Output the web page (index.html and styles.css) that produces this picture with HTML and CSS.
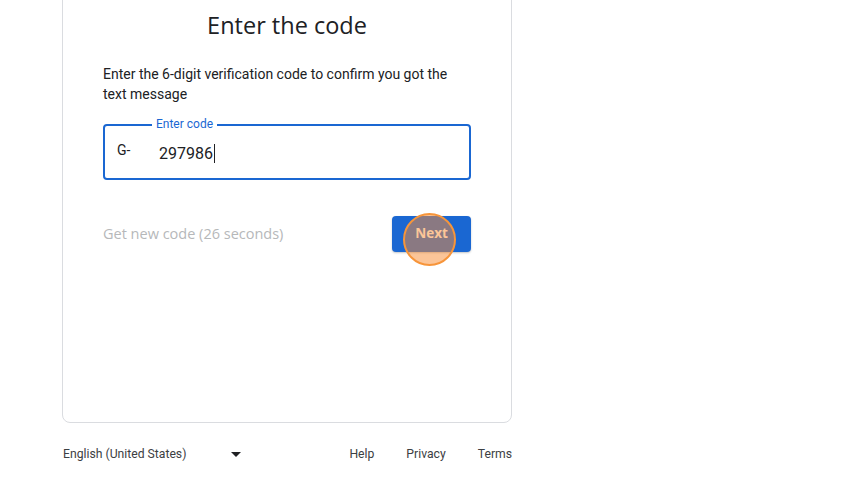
FILE: index.html
```html
<!DOCTYPE html>
<html lang="en">
<head>
<meta charset="utf-8">
<title>Enter the code</title>
<link rel="stylesheet" href="styles.css">
</head>
<body>
<div class="page">
  <main class="card">
    <h1 class="title">Enter the code</h1>
    <p class="desc">Enter the 6-digit verification code to confirm you got the text message</p>
    <div class="field">
      <span class="label">Enter code</span>
      <span class="prefix">G-</span>
      <span class="value">297986</span><span class="caret"></span>
    </div>
    <div class="actions">
      <span class="resend">Get new code (26 seconds)</span>
      <button class="next">Next<span class="click"></span></button>
    </div>
  </main>
  <footer class="footer">
    <div class="lang">
      <span>English (United States)</span>
      <svg class="arrow" width="10" height="5" viewBox="0 0 10 5"><path d="M0 0h10L5 5z" fill="#202124"/></svg>
    </div>
    <nav class="links">
      <a>Help</a>
      <a>Privacy</a>
      <a>Terms</a>
    </nav>
  </footer>
</div>
</body>
</html>
```

FILE: styles.css
```css
html, body {
  margin: 0;
  padding: 0;
  background: #fff;
  overflow: hidden;
}
.page {
  width: 450px;
  margin-left: 62px;
  font-family: Roboto, "Liberation Sans", Arial, sans-serif;
  color: #202124;
}
.card {
  box-sizing: border-box;
  height: 454px;
  margin-top: -31px;
  border: 1px solid #dadce0;
  border-radius: 8px;
  padding: 39px 40px 0;
}
.title {
  margin: 0;
  font-family: "Open Sans", Roboto, sans-serif;
  font-weight: 400;
  font-size: 23.5px;
  line-height: 32px;
  text-align: center;
  color: #202124;
}
.desc {
  margin: 23px 0 0;
  font-size: 14px;
  line-height: 20px;
  color: #202124;
}
.field {
  position: relative;
  box-sizing: border-box;
  height: 56px;
  margin-top: 20px;
  border: 2px solid #1a67d2;
  border-radius: 4px;
  display: flex;
  align-items: center;
  padding-left: 12px;
}
.label {
  position: absolute;
  top: -9px;
  left: 47px;
  padding: 0 4px;
  background: #fff;
  font-size: 12px;
  line-height: 14px;
  color: #1a67d2;
}
.prefix {
  font-size: 14px;
  width: 42px;
  margin-top: -4px;
}
.value {
  font-size: 16px;
  color: #202124;
  margin-top: 2px;
}
.caret {
  width: 1px;
  height: 19px;
  background: #202124;
  margin-left: 1px;
  margin-top: 2px;
}
.actions {
  margin-top: 36px;
  display: flex;
  align-items: center;
  justify-content: space-between;
  height: 36px;
}
.resend {
  font-family: "Open Sans", Roboto, sans-serif;
  font-size: 14.5px;
  font-weight: 500;
  color: #b6b8ba;
  margin-top: -2px;
}
.next {
  position: relative;
  width: 79px;
  height: 36px;
  border: none;
  border-radius: 4px;
  background: #1a67d2;
  color: #fff;
  font-family: "Open Sans", Roboto, sans-serif;
  font-weight: 700;
  font-size: 13.5px;
  padding: 0 0 3px;
  box-shadow: 0 1px 2px rgba(60,64,67,0.3);
}
.click {
  position: absolute;
  left: 11px;
  top: -3px;
  width: 49px;
  height: 49px;
  border: 2px solid #f7953a;
  border-radius: 50%;
  background: rgba(250, 140, 50, 0.5);
}
.footer {
  margin-top: 21px;
  display: flex;
  justify-content: space-between;
  align-items: center;
  height: 20px;
  font-size: 12.2px;
  color: #3c4043;
}
.lang {
  display: flex;
  align-items: center;
  padding-left: 1px;
}
.arrow {
  margin-left: 45px;
}
.links {
  display: flex;
  gap: 32px;
}
.links a {
  color: #3c4043;
}
```
